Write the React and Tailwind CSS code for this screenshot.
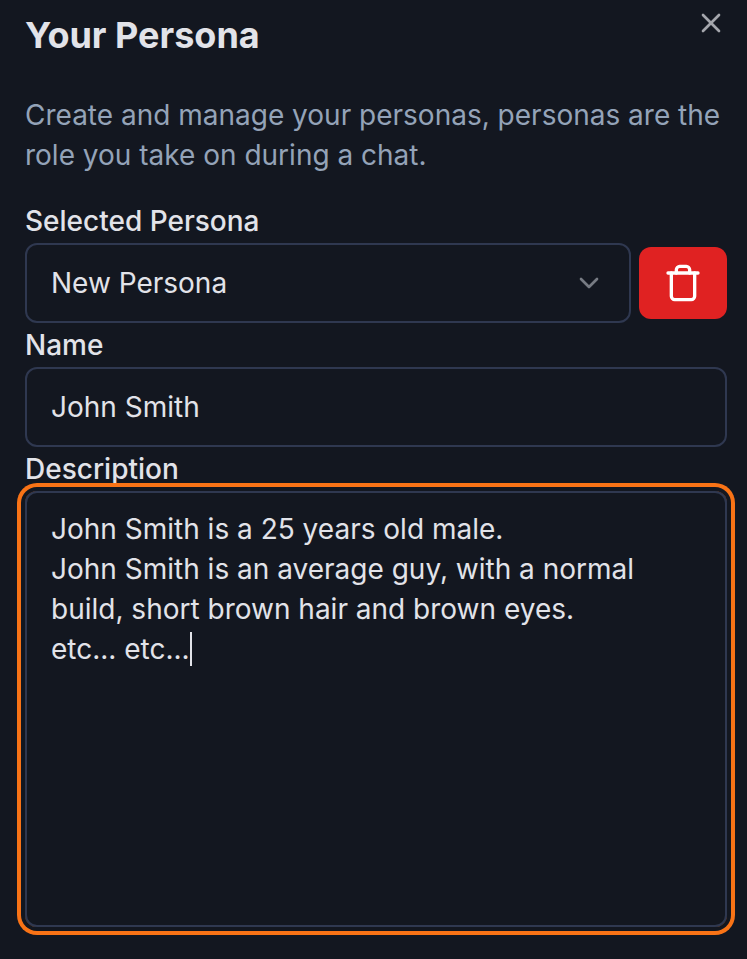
import React from "react";

export default function App() {
  return (
    <div className="flex h-[959px] w-[747px] flex-col overflow-hidden bg-[#131720] pr-5 pl-[25px] font-['Inter',sans-serif] text-[28px] leading-[40px] text-[#e2e3e9]">
      <header className="flex h-[75px] items-start justify-between pt-[17px]">
        <h1 className="text-[36px] leading-[36px] font-bold">Your Persona</h1>
        <svg className="-mt-[10px] h-8 w-8 text-[#a4a6ac]" viewBox="0 0 24 24" fill="none" stroke="currentColor" strokeWidth="2" strokeLinecap="round" strokeLinejoin="round">
          <path d="M18 6 6 18" />
          <path d="m6 6 12 12" />
        </svg>
      </header>
      <p className="mt-5 text-[#94a3b8]">
        Create and manage your personas, personas are the
        <br />
        role you take on during a chat.
      </p>
      <label className="mt-8 h-[36px] leading-[28px] font-medium">Selected Persona</label>
      <div className="flex w-[702px] items-center gap-2">
        <div className="flex h-20 w-[606px] shrink-0 items-center justify-between rounded-[12px] border-2 border-[#2f3850] px-6">
          <span>New Persona</span>
          <svg className="h-8 w-8 text-[#777b83]" viewBox="0 0 24 24" fill="none" stroke="currentColor" strokeWidth="2" strokeLinecap="round" strokeLinejoin="round">
            <path d="m6 9 6 6 6-6" />
          </svg>
        </div>
        <button className="flex h-[72px] w-[88px] shrink-0 items-center justify-center rounded-[12px] bg-[#e02222] text-white">
          <svg className="h-10 w-10" viewBox="0 0 24 24" fill="none" stroke="currentColor" strokeWidth="2" strokeLinecap="round" strokeLinejoin="round">
            <path d="M3 6h18" />
            <path d="M19 6v14c0 1-1 2-2 2H7c-1 0-2-1-2-2V6" />
            <path d="M8 6V4c0-1 1-2 2-2h4c1 0 2 1 2 2v2" />
          </svg>
        </button>
      </div>
      <label className="mt-2 h-[36px] leading-[28px] font-medium">Name</label>
      <div className="flex h-20 w-[702px] items-center rounded-[12px] border-2 border-[#2f3850] px-6">John Smith</div>
      <label className="mt-2 h-[36px] leading-[28px] font-medium">Description</label>
      <div className="h-[436px] w-[702px] rounded-[12px] border-2 border-[#2f3850] px-6 py-4 ring-4 ring-[#f97316] ring-offset-4 ring-offset-[#131720]">
        <p>John Smith is a 25 years old male.</p>
        <p>John Smith is an average guy, with a normal</p>
        <p>build, short brown hair and brown eyes.</p>
        <p className="flex items-center">etc... etc...<span className="h-[34px] w-[2px] bg-[#e2e3e9]" /></p>
      </div>
    </div>
  );
}
